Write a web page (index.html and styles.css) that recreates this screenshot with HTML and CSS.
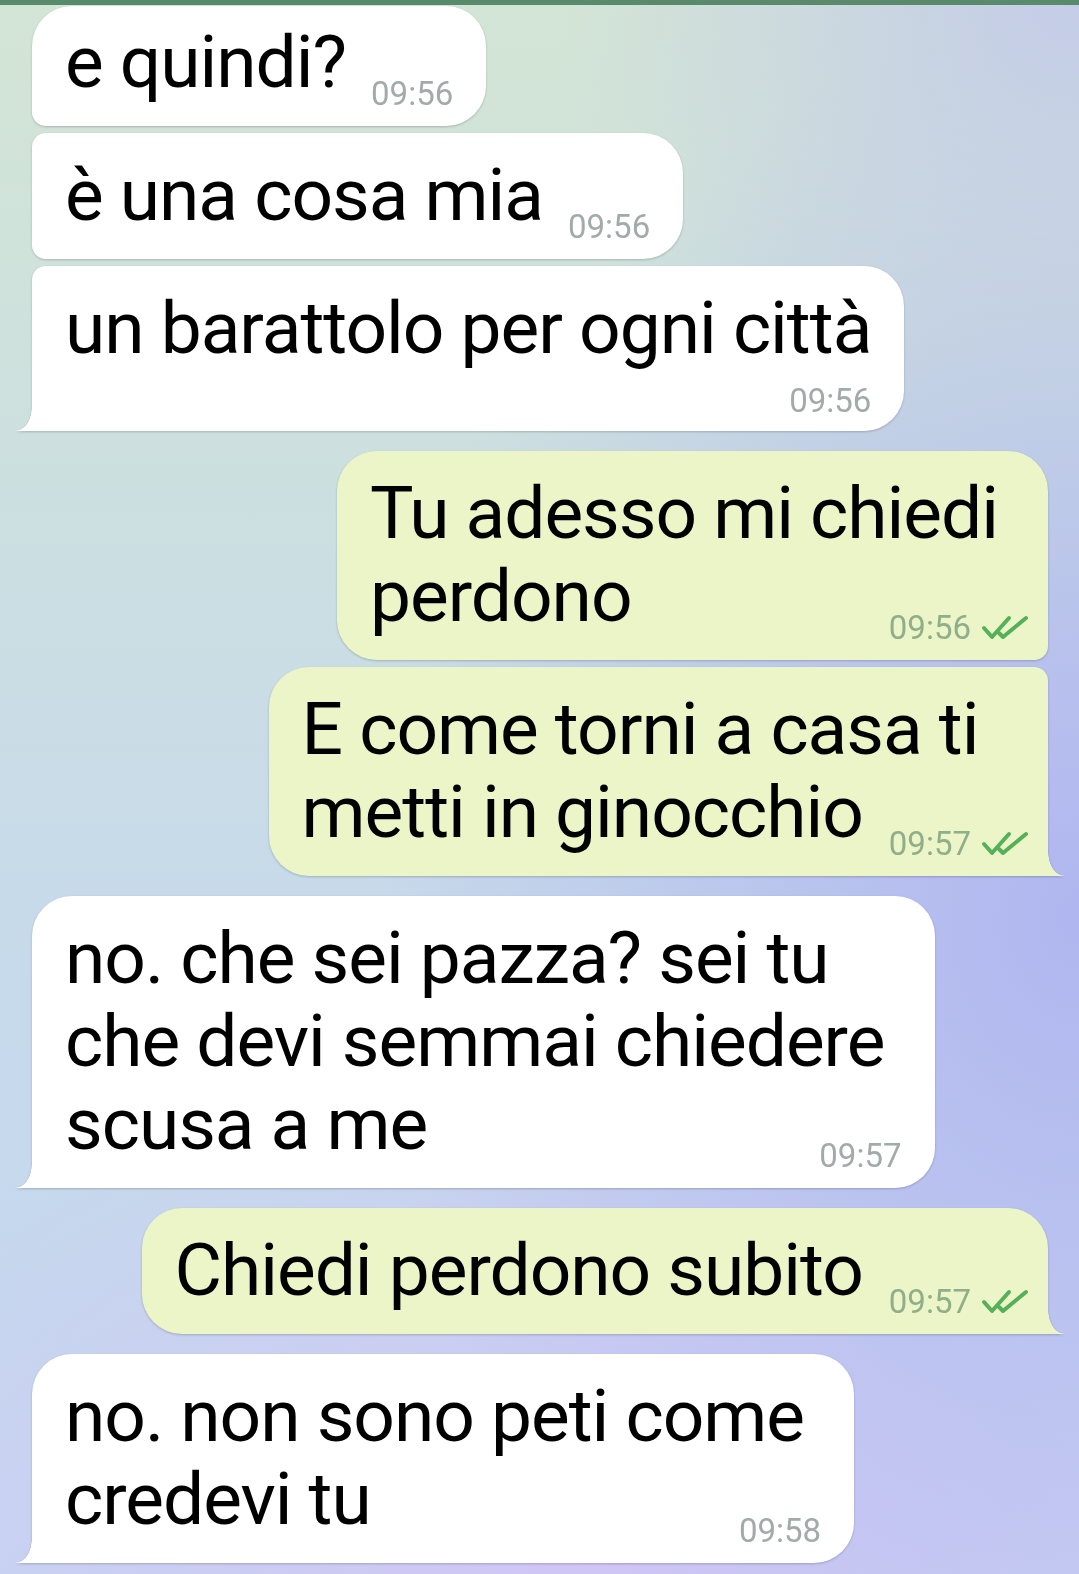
FILE: index.html
```html
<!DOCTYPE html>
<html lang="it">
<head>
  <meta charset="UTF-8" />
  <meta name="viewport" content="width=device-width, initial-scale=1.0">
  <title>Chat</title>
  <link rel="stylesheet" href="styles.css">
</head>
<body>
  <div class="top-strip"></div>

  <main class="chat">
    <!-- incoming group -->
    <div class="msg in start">
      <span class="text">e quindi?</span><span class="meta"><span class="time">09:56</span></span>
    </div>
    <div class="msg in mid">
      <span class="text">è una cosa mia</span><span class="meta"><span class="time">09:56</span></span>
    </div>
    <div class="msg in end stacked">
      <span class="text">un barattolo per ogni città</span><span class="meta"><span class="time">09:56</span></span>
    </div>

    <!-- outgoing group -->
    <div class="msg out start new-group">
      <span class="text">Tu adesso mi chiedi&nbsp;<br>perdono</span><span class="meta"><span class="time">09:56</span><svg class="ticks" viewBox="0 0 48 26"><path d="M3 13 L11 22 L28 3" /><path d="M18 18 L22 22 L45 3" /></svg></span>
    </div>
    <div class="msg out end">
      <span class="text">E come torni a casa ti<br>metti in ginocchio</span><span class="meta"><span class="time">09:57</span><svg class="ticks" viewBox="0 0 48 26"><path d="M3 13 L11 22 L28 3" /><path d="M18 18 L22 22 L45 3" /></svg></span>
    </div>

    <div class="msg in solo new-group">
      <span class="text">no. che sei pazza? sei tu<br>che devi semmai chiedere&nbsp;<br>scusa a me</span><span class="meta"><span class="time">09:57</span></span>
    </div>

    <div class="msg out solo new-group">
      <span class="text">Chiedi perdono subito</span><span class="meta"><span class="time">09:57</span><svg class="ticks" viewBox="0 0 48 26"><path d="M3 13 L11 22 L28 3" /><path d="M18 18 L22 22 L45 3" /></svg></span>
    </div>

    <div class="msg in solo new-group">
      <span class="text">no. non sono peti come&nbsp;<br>credevi tu</span><span class="meta"><span class="time">09:58</span></span>
    </div>
  </main>
</body>
</html>
```

FILE: styles.css
```css
:root {
  --in-bg: #ffffff;
  --out-bg: #ecf5c8;
  --text-color: #000000;
  --time-in: #a2aaaa;
  --time-out: #8fae89;
  --tick-color: #55b05a;
  --strip: #588a6b;
  --radius: 40px;
  --radius-small: 14px;
}

* {
  box-sizing: border-box;
  margin: 0;
  padding: 0;
}

body {
  font-family: Roboto, 'Liberation Sans', sans-serif;
  color: var(--text-color);
  width: 1079px;
  min-height: 1574px;
  overflow: hidden;
  background:
    radial-gradient(520px 420px at 100% 0%, rgba(196, 204, 232, 1), rgba(196, 204, 232, 0)),
    radial-gradient(720px 900px at 100% 58%, rgba(176, 182, 240, 1), rgba(176, 182, 240, 0)),
    radial-gradient(820px 520px at 55% 100%, rgba(208, 197, 245, 1), rgba(208, 197, 245, 0)),
    linear-gradient(180deg, #d3e5d5 0%, #cde0df 28%, #c7daea 58%, #c5d6f1 100%);
}

.top-strip {
  height: 5px;
  background-color: var(--strip);
}

.chat {
  display: flex;
  flex-direction: column;
  padding: 1px 31px 20px 32px;
}

/* Bubbles */
.msg {
  position: relative;
  display: flow-root;
  max-width: 920px;
  padding: 21px 33px 22px;
  font-size: 73px;
  letter-spacing: -1px;
  line-height: 83px;
  filter: drop-shadow(0 1px 1.2px rgba(0, 0, 0, 0.2));
}

.msg + .msg {
  margin-top: 7px;
}

.msg.new-group {
  margin-top: 20px;
}

.chat .msg:first-child {
  padding-top: 15px;
}

.msg.in {
  align-self: flex-start;
  background-color: var(--in-bg);
}

.msg.out {
  align-self: flex-end;
  background-color: var(--out-bg);
}

.msg.in.start { border-radius: var(--radius) var(--radius) var(--radius) var(--radius-small); }
.msg.in.mid { border-radius: var(--radius-small) var(--radius) var(--radius) var(--radius-small); }
.msg.in.end { border-radius: var(--radius-small) var(--radius) var(--radius) 0; }
.msg.in.solo { border-radius: var(--radius) var(--radius) var(--radius) 0; }

.msg.out.start { border-radius: var(--radius) var(--radius) var(--radius-small) var(--radius); }
.msg.out.end { border-radius: var(--radius) var(--radius-small) 0 var(--radius); }
.msg.out.solo { border-radius: var(--radius) var(--radius) 0 var(--radius); }

/* tail at the last bubble of a group */
.msg.end::after,
.msg.solo::after {
  content: "";
  position: absolute;
  bottom: 0;
  width: 16px;
  height: 24px;
}

.msg.in.end::after,
.msg.in.solo::after {
  left: -16px;
  background: radial-gradient(16px 24px at 0 0, transparent 97%, var(--in-bg) 100%);
}

.msg.out.end::after,
.msg.out.solo::after {
  right: -16px;
  background: radial-gradient(16px 24px at 100% 0, transparent 97%, var(--out-bg) 100%);
}

/* time + ticks */
.meta {
  float: right;
  display: flex;
  align-items: center;
  margin-top: 56px;
  margin-bottom: -10px;
  margin-left: 25px;
  height: 34px;
  line-height: 34px;
  letter-spacing: 0;
}

.msg.out .meta {
  margin-left: 26px;
  margin-right: -14px;
}

.msg.stacked .meta {
  float: none;
  justify-content: flex-end;
  margin-top: 13px;
  margin-left: 0;
  margin-bottom: -10px;
  height: 36px;
}

.time {
  font-size: 33px;
  color: var(--time-in);
}

.msg.out .time {
  color: var(--time-out);
}

.ticks {
  width: 48px;
  height: 26px;
  margin-left: 10px;
  fill: none;
  stroke: var(--tick-color);
  stroke-width: 4;
  stroke-linecap: round;
  stroke-linejoin: round;
}
```
